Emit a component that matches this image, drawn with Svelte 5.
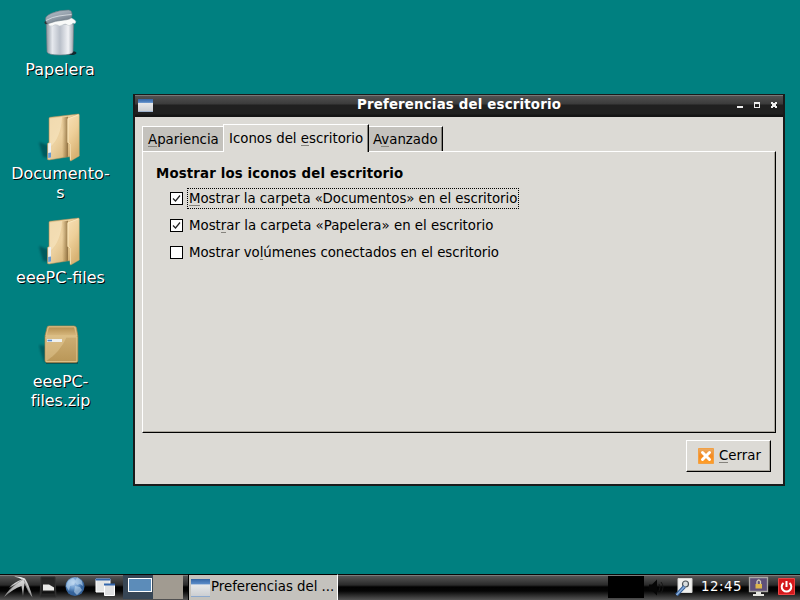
<script>
  const options = [
    { pre: '', key: 'M', post: 'ostrar la carpeta «Documentos» en el escritorio', checked: true, focus: true, spacing: -0.045 },
    { pre: 'Most', key: 'r', post: 'ar la carpeta «Papelera» en el escritorio', checked: true, focus: false, spacing: 0 },
    { pre: 'Mostrar vo', key: 'l', post: 'úmenes conectados en el escritorio', checked: false, focus: false, spacing: -0.055 }
  ];
</script>

{#snippet folder()}
  <svg width="60" height="60" viewBox="0 0 60 60">
    <defs>
      <linearGradient id="fb" x1="0" x2="1" y2="1"><stop stop-color="#e6c995" /><stop offset=".45" stop-color="#ecd1a0" /><stop offset="1" stop-color="#cba564" /></linearGradient>
      <linearGradient id="ff" x1="0" x2=".4" y2="1"><stop stop-color="#f7e0b6" /><stop offset=".5" stop-color="#eed09a" /><stop offset="1" stop-color="#d8b273" /></linearGradient>
      <linearGradient id="fs" x1="0" x2="1"><stop stop-color="#8c6c38" stop-opacity="0" /><stop offset="1" stop-color="#75572b" stop-opacity=".75" /></linearGradient>
      <filter id="blur"><feGaussianBlur stdDeviation="1.3" /></filter>
    </defs>
    <path d="M9 38l11 4v12l-7-1-2-7z" fill="#00343a" opacity=".5" filter="url(#blur)" />
    <path d="M19 14.500q0-1 1-1.200L48.500 10v42L37 53l-18 3-1.500-.5V39.500l1.500-1z" fill="url(#fb)" stroke="#b89158" stroke-width=".5" />
    <path d="M20 14.500l12-1.400q-1 21-12 30z" fill="#fff3d5" opacity=".4" />
    <path d="M32 13.500l6-.7v40l-5 .7q-1-4-1-8z" fill="url(#fs)" />
    <path d="M48.500 10.200q.8 0 .8.800V52l-8.500 5q-.8 0-.8-1l-.4-15.500-2.200-2V15q0-.6 1-1z" fill="url(#ff)" stroke="#c39c5c" stroke-width=".4" />
    <path d="M48.500 10.800L38 14.800v23.400l2.100 2.100.4 15.500" fill="none" stroke="#fff0cc" stroke-width=".7" />
    <path d="M18.200 39.500l2.800-.6v14.600l-2.800.6z" fill="#edf0f1" /><path d="M18.200 49l2.800-.6v5l-2.800.6z" fill="#669bd4" />
  </svg>
{/snippet}

{#snippet appIcon()}
  <svg width="20" height="20" viewBox="0 0 20 20" preserveAspectRatio="none">
    <defs><linearGradient id="wb" y2="1" x2="0"><stop stop-color="#f5f5f5" /><stop offset="1" stop-color="#c9ccd0" /></linearGradient><linearGradient id="wh" y2="1" x2="0"><stop stop-color="#3465a4" /><stop offset="1" stop-color="#5f8fcb" /></linearGradient></defs>
    <path d="M0 0h20v20H0z" fill="url(#wb)" /><path d="M0 0h20v6H0z" fill="url(#wh)" /><path d="M0 19h20v1H0z" fill="#86a5cd" />
  </svg>
{/snippet}

<main>
  <div class="desktop">
    <div class="item">
      <svg width="60" height="60" viewBox="0 0 60 60">
        <defs><linearGradient id="can"><stop stop-color="#8b949d" /><stop offset=".22" stop-color="#e6e9ee" /><stop offset=".5" stop-color="#b9bfc9" /><stop offset=".8" stop-color="#f1f2f5" /><stop offset="1" stop-color="#9aa2ab" /></linearGradient><linearGradient id="lid" x2=".6" y2="1"><stop stop-color="#bcc6cf" /><stop offset=".5" stop-color="#9aa5b0" /><stop offset="1" stop-color="#6c7884" /></linearGradient></defs>
        <ellipse cx="41" cy="53" rx="5.500" ry="2" fill="#12292f" />
        <ellipse cx="18" cy="22.500" rx="3.500" ry="2" fill="#2b3538" />
        <path d="M16.300 24l.7 28q1 3 13 3t13-3l.7-28z" fill="url(#can)" stroke="#717b83" stroke-width=".6" />
        <path d="M18 23.500q3-4 11-5 10-3 15 1 3 2 1 4-2-1-3.500 1-3 2-4 .5-2-2-5 0-3 2-5 0-3-1-5 1-3 1-4.500-2.500z" fill="#f9faf9" stroke="#bbc3c8" stroke-width=".5" />
        <path d="M15.500 19.500q-.5-3.500 6-6.200 8-3.300 17-3.300 4 0 3.500 6-.5 3.500-8 4-9 .8-15.500 3.500-2.500 0-3-4z" fill="url(#lid)" stroke="#67757f" stroke-width=".6" />
        <path d="M16 20.500q6-3.500 13-4.500 8-1.200 12.500-1.500" fill="none" stroke="#dfe5e9" stroke-width=".8" />
      </svg>
      <span>Papelera</span>
    </div>
    <div class="item">{@render folder()}<span class="shift">Documento-<br />s</span></div>
    <div class="item">{@render folder()}<span class="shift">eeePC-files</span></div>
    <div class="item">
      <svg width="60" height="60" viewBox="0 0 60 60">
        <defs><linearGradient id="box" x2="0" y2="1"><stop stop-color="#d5b77f" /><stop offset="1" stop-color="#b99657" /></linearGradient><linearGradient id="top" x2="0" y2="1"><stop stop-color="#b38e4f" /><stop offset="1" stop-color="#d9ba80" /></linearGradient></defs>
        <path d="M9 33l9 1v16h-4l-3-9z" fill="#002b34" opacity=".4" filter="url(#blur)" />
        <path d="M16 49h32v3H16z" fill="#123b38" opacity=".6" />
        <path d="M19 14h25q2 0 2.500 2L47.800 24v24.500q0 2-2 2H17q-2 0-2-2V24l2-8q0-2 2-2z" fill="url(#box)" stroke="#ac8447" stroke-width=".7" />
        <path d="M18.500 15h26l2.300 9H16z" fill="url(#top)" stroke="#e3c78f" stroke-width=".7" />
        <path d="M16 25h30.800v24.500H16z" fill="none" stroke="#e4c992" stroke-width=".8" />
        <path d="M16.500 25.500h20Q30 40 16.500 49z" fill="#f3ddad" opacity=".35" />
        <path d="M17 27h15v3H17z" fill="#eef0ef" /><path d="M17.500 27.700h4.500v1.600h-4.500z" fill="#5a8ccb" />
      </svg>
      <span class="shift zip">eeePC-<br />files.zip</span>
    </div>
  </div>

  <section class="window">
    <header>
      <div class="ticon">{@render appIcon()}</div>
      <b>Preferencias del escritorio</b>
      <svg class="controls" width="42" height="8" viewBox="0 0 42 8" shape-rendering="crispEdges">
        <path d="M0 5h6v2H0z" fill="#eee" /><path d="M17 1h6v6h-6zM18 3v3h4V3z" fill="#eee" fill-rule="evenodd" />
        <path d="M34 1h2v1h2V1h2v2h-1v2h1v2h-2V6h-2v1h-2V5h1V3h-1z" fill="#eee" />
      </svg>
    </header>
    <nav>
      <div class="tab first"><span><u>A</u>pariencia</span></div>
      <div class="tab active"><span>Iconos del <u>e</u>scritorio</span></div>
      <div class="tab last"><span>A<u>v</u>anzado</span></div>
    </nav>
    <div class="page">
      <h1>Mostrar los iconos del escritorio</h1>
      {#each options as o}
        <div class="option">
          <i class="box">{#if o.checked}<svg width="11" height="11" viewBox="0 0 11 11"><path d="M2 5.500L4.500 8 9 2.500" fill="none" stroke="#222" stroke-width="1.200" /></svg>{/if}</i>
          <span class:focus={o.focus} style="letter-spacing:{o.spacing}px">{o.pre}<u>{o.key}</u>{o.post}</span>
        </div>
      {/each}
    </div>
    <footer>
      <button>
        <svg width="16" height="16" viewBox="0 0 16 16"><defs><linearGradient id="or" x2="0" y2="1"><stop stop-color="#e9ab66" /><stop offset=".5" stop-color="#f58a20" /><stop offset="1" stop-color="#ffa02a" /></linearGradient></defs><path d="M.5.500h15v15H.5z" fill="url(#or)" stroke="#f2a044" /><path d="M4.500 4.500l7 7m0-7l-7 7" stroke="#fff" stroke-width="3" stroke-linecap="round" /></svg>
        <span><u>C</u>errar</span>
      </button>
    </footer>
  </section>

  <div class="bar">
    <svg class="launch" width="123" height="26" viewBox="0 0 123 26">
      <defs><radialGradient id="globe" cx=".4" cy=".3"><stop stop-color="#b5d0ee" /><stop offset=".6" stop-color="#6a99cc" /><stop offset="1" stop-color="#34629a" /></radialGradient><linearGradient id="feather" x2="0" y2="1"><stop stop-color="#eee" /><stop offset="1" stop-color="#8b8b8b" /></linearGradient></defs>
      <path d="M14 2.500Q20 2 25 4.500q5 8 7.500 19Q28 18 24.500 9l-1.500 13-1.500-10Q13 15 4 23q5-8 12-13l-7 4q5-6 13-8.500-3-2-8-3z" fill="url(#feather)" />
      <path d="M23 5.500Q13 11 6 21M24 6l5 13" fill="none" stroke="#666" stroke-width=".5" />
      <path d="M41 3h14l1 20H40z" fill="#252525" stroke="#343434" /><path d="M43 10.500h6l5 3v3H43z" fill="#e9e9e7" /><path d="M42 17.500h12.500v2H42z" fill="#111" />
      <circle cx="75" cy="12.500" r="9.500" fill="url(#globe)" /><path d="M68 7l5-3 3 3-2 4-4 1-1 5-3-5zm9-4l5 4 1 5-3-2-3 1-2-3zm-2 9l5 1 2 3-5 5-3-3z" fill="#c6dff3" opacity=".55" />
      <path d="M96 5h14v13H96z" fill="#e4e5e5" stroke="#fff" /><path d="M95.500 4.500h15v2h-15z" fill="#3467ad" /><path d="M104.500 10.500h10v11h-10z" fill="#dfe0e1" stroke="#fff" /><path d="M104 9.500h11v2h-11z" fill="#3467ad" />
    </svg>
    <div class="pager"><div><i></i></div><div></div></div>
    <div class="task"><div class="taskicon">{@render appIcon()}</div><span>Preferencias del ...</span></div>
    <div class="monitor"></div>
    <svg class="vol" width="58" height="26" viewBox="0 0 58 26">
      <path d="M5 10.500h3l5-5v16l-5-5H5z" fill="#060606" /><path d="M15 10q2 3 0 7m2-9q4 5 0 11" stroke="#161616" fill="none" />
      <path d="M34 4.500h14v14H34z" fill="#f0f0ee" stroke="#d7d7d5" /><circle cx="41.500" cy="10" r="3" fill="#d8dddf" stroke="#4c5358" stroke-width="1.200" /><path d="M40.500 12.500l-8 8.500" stroke="#315d96" stroke-width="3.500" /><path d="M40.500 12.500l-8 8.500" stroke="#8cafdc" stroke-width="1.500" />
    </svg>
    <span class="clock">12:45</span>
    <svg class="end" width="56" height="26" viewBox="0 0 56 26">
      <path d="M6.500 3.500h18v14h-18z" fill="#5f5078" stroke="#aaa8a5" stroke-width="1.300" /><path d="M13 18h5v2h3v2H10v-2h3z" fill="#e4e4df" />
      <path d="M14 10V7.500q1.700-3 3.500 0V10" fill="none" stroke="#d2cbb7" stroke-width="1.300" /><path d="M12.500 10h6.500v4.500h-6.500z" fill="#deb64d" />
      <path d="M35.500 4.500h16v16h-16z" fill="#d5191c" stroke="#e94445" /><path d="M40.500 9a4.800 4.800 0 1 0 6 0M43.500 7v6" fill="none" stroke="#fff" stroke-width="2" />
    </svg>
  </div>
</main>

<style>
  :global(body) { margin: 0; }
  main { position: relative; display: flex; flex-direction: column; width: 800px; height: 600px; overflow: hidden; background: #008080; color: #000; font: 13.333px/16px "DejaVu Sans", sans-serif; }
  main *, main { box-sizing: border-box; }
  svg { display: block; flex: none; }
  span, b, h1 { white-space: nowrap; }
  u { text-decoration: none; background: linear-gradient(#85837d, #85837d) 0 14px / 100% 1px no-repeat; }
  .desktop { height: 574px; width: 120px; }
  .item { height: 104px; display: flex; flex-direction: column; align-items: center; text-align: center; }
  .item span { font-size: 16px; line-height: 19px; color: #fff; text-shadow: 1px 1px #000; }
  .item .shift { padding-left: 1px; }
  .item .zip { letter-spacing: -.12px; }
  .window { position: absolute; left: 133px; top: 94px; width: 652px; height: 392px; border: 2px solid #191b1b; border-top-width: 1px; background: #dcdad5; }
  header { height: 22px; display: flex; align-items: center; padding: 0 4px 0 3px; background: linear-gradient(#777 0 1px, #515151 1px, #3b3b3b 9px, #202020 10px, #202020 19px, #151515 20px); }
  header b { flex: 1; text-align: center; color: #fff; letter-spacing: .19px; margin: -3px -28px 0 0; }
  .controls { margin-top: -2px; }
  .ticon { margin-top: -2px; }
  .ticon svg { width: 15px; height: 13px; }
  nav { height: 35px; padding: 7px 0 0 7px; display: flex; align-items: flex-start; position: relative; }
  .tab { height: 25px; margin-top: 2px; background: #c4c2bd; border-top: 1px solid #fff; padding-top: 5px; }
  .first { width: 81px; border-left: 1px solid #fff; padding-left: 5px; }
  .active { height: 28px; width: 146px; margin-top: 0; padding: 6px 0 0 5px; background: #dcdad5; border-left: 1px solid #fff; border-right: 1px solid #000; box-shadow: inset -1px 0 #85837d; }
  .last { width: 74px; padding-left: 4px; border-right: 1px solid #000; box-shadow: inset -1px 0 #85837d; }
  .page { margin: -1px 7px 0; height: 282px; border: 1px solid #fff; border-right-color: #000; border-bottom-color: #000; box-shadow: inset -1px -1px #aaa69d; padding: 14px 13px 13px; }
  h1 { margin: 0 0 3px; font-size: 13.333px; line-height: 16px; letter-spacing: .15px; }
  .option { height: 27px; display: flex; align-items: flex-start; padding-left: 14px; }
  .box { width: 13px; height: 13px; border: 1px solid #000; background: #fff; margin: 7px 4px 0 0; }
  .option span { height: 21px; line-height: 19px; padding: 0 1px; margin-top: 3px; border: 1px dotted transparent; }
  .option .focus { border-color: #000; }
  footer { display: flex; justify-content: flex-end; padding: 7px 12px; }
  button { width: 85px; height: 32px; display: flex; align-items: center; gap: 5px; padding: 0 0 0 11px; font: inherit; color: #000; background: #dcdad5; border: 1px solid; border-color: #fff #000 #000 #fff; box-shadow: inset -1px -1px #aaa69d; }
  button svg { margin-top: -1px; }
  .bar { height: 26px; display: flex; background: linear-gradient(#080808 0 1px, #7b7b7b 1px 2px, #555 2px, #2a2a2a 11px, #020202 13px, #050505 17px, #555 26px); }
  .pager { display: flex; width: 60px; height: 24px; margin-top: 1px; }
  .pager div { width: 30px; background: #a19b91; }
  .pager div:first-child { background: #374655; padding: 3px 0 0 5px; }
  .pager i { display: block; width: 24px; height: 14px; background: #5c8cb9; border: 1px solid #fff; }
  .task { width: 150px; height: 26px; margin-left: 5px; display: flex; align-items: center; background: #c4c2bd; border: 1px solid #000; border-right-color: #fff; border-bottom: 0; padding-left: 2px; gap: 1px; }
  .task span { margin-top: -2px; letter-spacing: -.02px; }
  .taskicon svg { width: 19px; height: 18px; }
  .monitor { width: 36px; height: 22px; margin: 2px 0 0 270px; background: #000; }
  .clock { color: #fff; width: 42px; margin: 5px 0 0 -1px; letter-spacing: .5px; }
</style>
